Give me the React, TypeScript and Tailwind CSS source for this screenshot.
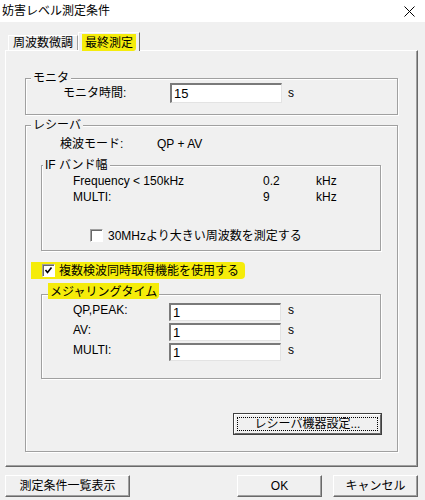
import React from 'react';

const Group: React.FC<{
  label: string;
  className: string;
  labelBox?: string;
  labelClass?: string;
  children?: React.ReactNode;
}> = ({ label, className, labelBox = '-mt-[8px] ml-[5px] h-[14px]', labelClass = '', children }) => (
  <div className={`border border-[#a0a0a0] shadow-[1px_1px_0_#fff,inset_1px_1px_0_#fff] ${className}`}>
    <div className={`flex ${labelBox}`}>
      <span className={`bg-[#f0f0f0] px-[2px] leading-[14px] ${labelClass}`}>{label}</span>
    </div>
    {children}
  </div>
);

const TextBox: React.FC<{ value: string; h: string }> = ({ value, h }) => (
  <div
    className={`w-[112px] ${h} flex items-center bg-white border-t-2 border-l-2 border-t-[#7a7a7a] border-l-[#7a7a7a] border-r border-b border-r-[#e3e3e3] border-b-[#e3e3e3] pl-[2px] text-[13px] leading-none`}
  >
    {value}
  </div>
);

const CheckBox: React.FC<{ checked?: boolean }> = ({ checked }) => (
  <div className="w-[13px] h-[13px] shrink-0 bg-white border-t border-l border-t-[#a0a0a0] border-l-[#a0a0a0] border-r border-b border-r-white border-b-white shadow-[inset_1px_1px_0_#696969] flex items-center justify-center">
    {checked && (
      <svg width="9" height="9" viewBox="0 0 9 9">
        <polyline points="1.5,4 3.5,6.5 7.5,1.5" fill="none" stroke="#000" strokeWidth="1.6" />
      </svg>
    )}
  </div>
);

const Button: React.FC<{ className: string; children: React.ReactNode }> = ({ className, children }) => (
  <div
    className={`h-[22px] flex items-center justify-center bg-[#f0f0f0] border border-t-white border-l-white border-r-[#696969] border-b-[#696969] shadow-[inset_-1px_-1px_0_#a0a0a0] ${className}`}
  >
    {children}
  </div>
);

export default function App() {
  return (
    <div className="w-[425px] h-[500px] bg-[#f0f0f0] text-[12px] text-black font-['Liberation_Sans','Noto_Sans_CJK_JP',sans-serif] flex flex-col overflow-hidden">
      {/* title bar */}
      <div className="h-[22px] bg-white flex items-center justify-between pl-[2px] pr-[10px]">
        <span className="text-[12px]">妨害レベル測定条件</span>
        <svg width="11" height="11" viewBox="0 0 11 11">
          <path d="M0.5 0.5 L10.5 10.5 M10.5 0.5 L0.5 10.5" stroke="#000" strokeWidth="1" />
        </svg>
      </div>

      {/* tabs */}
      <div className="mt-[10px] h-[18px] flex items-end pl-[8px]">
        <div className="h-[15px] w-[70px] flex items-center justify-center border-l border-t border-l-white border-t-white border-r border-r-[#a0a0a0] leading-none">
          周波数微調
        </div>
        <div className="relative z-10 -mb-px h-[19px] w-[62px] bg-[#f0f0f0] border-l border-t border-l-white border-t-white border-r border-r-[#696969] flex items-start pl-[3px] pt-[1px]">
          <span className="bg-[#f5ec0a] h-[17px] w-[54px] flex items-center justify-center rounded-br-[3px] leading-none">最終測定</span>
        </div>
      </div>

      {/* tab panel */}
      <div className="ml-[5px] w-[413px] h-[417px] border-l border-t border-white border-r border-b border-r-[#696969] border-b-[#696969] shadow-[inset_-1px_-1px_0_#a0a0a0] flex flex-col">
        <Group label="モニタ" className="ml-[19px] mt-[27px] w-[373px] h-[37px]">
          <div className="-mt-[2px] h-[20px] flex items-center pl-[37px]">
            <span className="w-[107px]">モニタ時間:</span>
            <TextBox value="15" h="h-[20px]" />
            <span className="ml-[6px]">s</span>
          </div>
        </Group>

        <Group label="レシーバ" className="ml-[19px] mt-[10px] w-[373px] h-[327px] flex flex-col">
          <div className="mt-[5px] h-[14px] flex items-center pl-[34px]">
            <span className="w-[97px]">検波モード:</span>
            <span>QP + AV</span>
          </div>

          <Group label="IF バンド幅" labelBox="-mt-[8px] ml-[1px] h-[14px]" className="ml-[15px] mt-[14px] w-[340px] h-[86px] flex flex-col">
            <div className="mt-[2px] h-[14px] flex items-center pl-[31px]">
              <span className="w-[190px]">Frequency &lt; 150kHz</span>
              <span className="w-[53px]">0.2</span>
              <span>kHz</span>
            </div>
            <div className="mt-[2px] h-[14px] flex items-center pl-[31px]">
              <span className="w-[190px]">MULTI:</span>
              <span className="w-[53px]">9</span>
              <span>kHz</span>
            </div>
            <div className="mt-[25px] h-[13px] flex items-center pl-[48px]">
              <CheckBox />
              <span className="ml-[5px]">30MHzより大きい周波数を測定する</span>
            </div>
          </Group>

          <div className="ml-[5px] mt-[11px] w-[214px] h-[17px] bg-[#f5ec0a] rounded-r-[4px] flex items-center pl-[11px]">
            <CheckBox checked />
            <span className="ml-[4px]">複数検波同時取得機能を使用する</span>
          </div>

          <Group
            label="メジャリングタイム"
            labelBox="-mt-[12px] ml-[6px] h-[16px]"
            labelClass="bg-[#f5ec0a] h-[16px] leading-[18px] rounded-br-[4px]"
            className="ml-[15px] mt-[15px] w-[340px] h-[85px] flex flex-col"
          >
            <div className="mt-[4px] flex flex-col gap-[2px]">
              {[
                ['QP,PEAK:', '1'],
                ['AV:', '1'],
                ['MULTI:', '1'],
              ].map(([k, v]) => (
                <div key={k} className="h-[18px] flex items-center pl-[31px]">
                  <span className="w-[96px] -mt-[4px]">{k}</span>
                  <TextBox value={v} h="h-[18px]" />
                  <span className="ml-[7px] -mt-[5px]">s</span>
                </div>
              ))}
            </div>
          </Group>

          <div className="ml-[207px] mt-[34px] w-[149px] h-[22px] border border-[#404040] flex">
            <div className="flex-1 bg-[#f0f0f0] border border-t-white border-l-white border-r-[#696969] border-b-[#696969] p-[2px] flex">
              <div className="flex-1 border border-dotted border-black flex items-center justify-center leading-none">
                レシーバ機器設定...
              </div>
            </div>
          </div>
        </Group>
      </div>

      {/* bottom buttons */}
      <div className="mt-[8px] flex pl-[5px]">
        <Button className="w-[125px]">測定条件一覧表示</Button>
        <Button className="ml-[107px] w-[85px]">OK</Button>
        <Button className="ml-[11px] w-[85px]">キャンセル</Button>
      </div>
    </div>
  );
}
